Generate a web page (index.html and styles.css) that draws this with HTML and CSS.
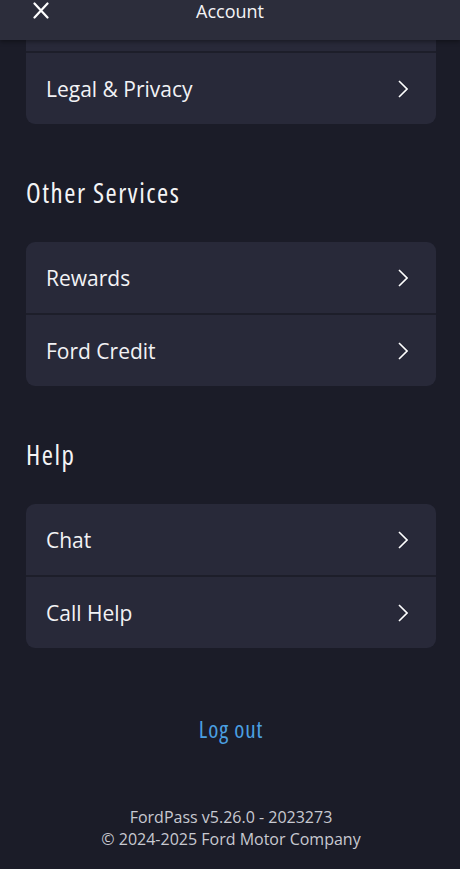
FILE: index.html
```html
<!DOCTYPE html>
<html lang="en">
<head>
<meta charset="utf-8">
<title>Account</title>
<link rel="stylesheet" href="styles.css">
</head>
<body>
<header class="topbar">
  <button class="close" aria-label="Close">
    <svg width="16" height="17" viewBox="0 0 16 17"><path d="M1.5 1.5 L14.5 15.5 M14.5 1.5 L1.5 15.5" stroke="#fff" stroke-width="2.2" stroke-linecap="round" fill="none"/></svg>
  </button>
  <div class="title">Account</div>
</header>
<main class="content">
  <section class="card card-cut">
    <div class="row row-cut"></div>
    <a class="row"><span>Legal &amp; Privacy</span><svg class="chev" width="10" height="18" viewBox="0 0 10 18"><polyline points="1,1 9,9 1,17" fill="none" stroke="#fff" stroke-width="1.6"/></svg></a>
  </section>

  <h2 class="heading">Other Services</h2>
  <section class="card">
    <a class="row"><span>Rewards</span><svg class="chev" width="10" height="18" viewBox="0 0 10 18"><polyline points="1,1 9,9 1,17" fill="none" stroke="#fff" stroke-width="1.6"/></svg></a>
    <a class="row"><span>Ford Credit</span><svg class="chev" width="10" height="18" viewBox="0 0 10 18"><polyline points="1,1 9,9 1,17" fill="none" stroke="#fff" stroke-width="1.6"/></svg></a>
  </section>

  <h2 class="heading">Help</h2>
  <section class="card">
    <a class="row"><span>Chat</span><svg class="chev" width="10" height="18" viewBox="0 0 10 18"><polyline points="1,1 9,9 1,17" fill="none" stroke="#fff" stroke-width="1.6"/></svg></a>
    <a class="row"><span>Call Help</span><svg class="chev" width="10" height="18" viewBox="0 0 10 18"><polyline points="1,1 9,9 1,17" fill="none" stroke="#fff" stroke-width="1.6"/></svg></a>
  </section>

  <div class="logout">Log out</div>

  <footer class="footer">
    <div>FordPass v5.26.0 - 2023273</div>
    <div>© 2024-2025 Ford Motor Company</div>
  </footer>
</main>
</body>
</html>
```
FILE: styles.css
```css
html, body {
  margin: 0;
  padding: 0;
}
body {
  background: #1b1c28;
  color: #f2f2f5;
  font-family: "Open Sans", "Liberation Sans", sans-serif;
  width: 460px;
  height: 869px;
  overflow: hidden;
}
.topbar {
  position: relative;
  height: 40px;
  background: #2c2d3b;
  box-shadow: 0 2px 4px rgba(0,0,0,0.35);
  z-index: 2;
}
.close {
  position: absolute;
  left: 33px;
  top: 2px;
  padding: 0;
  border: 0;
  background: none;
  display: block;
  line-height: 0;
}
.title {
  text-align: center;
  font-size: 18px;
  line-height: 22px;
  padding-top: 0;
  color: #f4f4f6;
}
.content {
  padding: 0 24px 0 26px;
}
.card {
  background: #282939;
  border-radius: 9px;
  overflow: hidden;
}
.card-cut {
  border-top-left-radius: 0;
  border-top-right-radius: 0;
}
.row {
  display: flex;
  align-items: center;
  justify-content: space-between;
  height: 71px;
  padding: 0 28px 0 20px;
  font-size: 21px;
  color: #f2f2f5;
}
.row + .row {
  border-top: 2px solid #1d1e2a;
}
.row-cut {
  height: 11px;
}
.chev {
  display: block;
  flex: none;
}
.heading {
  margin: 53px 0 33px;
  font-size: 27px;
  line-height: 32px;
  font-weight: 400;
  font-stretch: 75%;
  letter-spacing: 1.5px;
  color: #f4f4f6;
}
.logout {
  margin-top: 66px;
  text-align: center;
  font-size: 23px;
  line-height: 30px;
  font-stretch: 75%;
  letter-spacing: 0.9px;
  color: #4ba0e2;
}
.footer {
  margin-top: 62px;
  text-align: center;
  font-size: 16px;
  line-height: 22px;
  color: #c8c9d1;
}
```
